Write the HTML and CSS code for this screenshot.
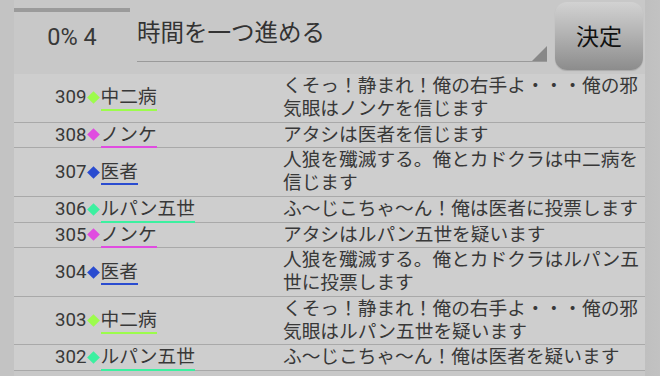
FILE: index.html
```html
<!DOCTYPE html>
<html lang="ja">
<head>
<meta charset="utf-8">
<link rel="stylesheet" href="styles.css">
</head>
<body>
<div class="app">
  <div class="header">
    <div class="progress">
      <div class="bar"></div>
      <div class="pct">0% 4</div>
    </div>
    <div class="select">
      <span class="select-text">時間を一つ進める</span>
      <span class="tri"></span>
    </div>
    <div class="btn">決定</div>
  </div>
  <div class="list">
    <div class="row">
      <div class="who"><span class="num">309</span><span class="dia c-green"></span><span class="name u-green">中二病</span></div>
      <div class="msg">くそっ！静まれ！俺の右手よ・・・俺の邪気眼はノンケを信じます</div>
    </div>
    <div class="row">
      <div class="who"><span class="num">308</span><span class="dia c-pink"></span><span class="name u-pink">ノンケ</span></div>
      <div class="msg">アタシは医者を信じます</div>
    </div>
    <div class="row">
      <div class="who"><span class="num">307</span><span class="dia c-blue"></span><span class="name u-blue">医者</span></div>
      <div class="msg">人狼を殲滅する。俺とカドクラは中二病を信じます</div>
    </div>
    <div class="row">
      <div class="who"><span class="num">306</span><span class="dia c-mint"></span><span class="name u-mint">ルパン五世</span></div>
      <div class="msg">ふ〜じこちゃ〜ん！俺は医者に投票します</div>
    </div>
    <div class="row">
      <div class="who"><span class="num">305</span><span class="dia c-pink"></span><span class="name u-pink">ノンケ</span></div>
      <div class="msg">アタシはルパン五世を疑います</div>
    </div>
    <div class="row">
      <div class="who"><span class="num">304</span><span class="dia c-blue"></span><span class="name u-blue">医者</span></div>
      <div class="msg">人狼を殲滅する。俺とカドクラはルパン五世に投票します</div>
    </div>
    <div class="row">
      <div class="who"><span class="num">303</span><span class="dia c-green"></span><span class="name u-green">中二病</span></div>
      <div class="msg">くそっ！静まれ！俺の右手よ・・・俺の邪気眼はルパン五世を疑います</div>
    </div>
    <div class="row">
      <div class="who"><span class="num">302</span><span class="dia c-mint"></span><span class="name u-mint">ルパン五世</span></div>
      <div class="msg">ふ〜じこちゃ〜ん！俺は医者を疑います</div>
    </div>
  </div>
</div>
</body>
</html>
```

FILE: styles.css
```css
html, body {
  margin: 0;
  padding: 0;
  background: #c7c7c7;
}
body {
  font-family: Roboto, "Noto Sans CJK JP", sans-serif;
  color: #3a3a3a;
  overflow: hidden;
}
.app {
  width: 660px;
  height: 376px;
  display: flex;
  flex-direction: column;
  background: linear-gradient(to right, #c3c3c3 0, #c3c3c3 14px, #c8c8c8 14px, #c8c8c8 645px, #bfbfbf 645px, #c2c2c2 660px);
}
.header {
  height: 74px;
  display: flex;
  padding-left: 14px;
  flex-shrink: 0;
}
.progress {
  width: 116px;
  padding-top: 8px;
}
.bar {
  height: 4px;
  background: #9b9b9b;
}
.pct {
  text-align: center;
  font-size: 23.5px;
  line-height: 28px;
  margin-top: 11px;
  color: #383838;
}
.select {
  margin-left: 7px;
  width: 410px;
  height: 61px;
  border-bottom: 1px solid #9a9a9a;
  position: relative;
}
.select-text {
  display: block;
  font-size: 23.5px;
  line-height: 30px;
  margin-top: 18px;
  color: #333;
}
.tri {
  position: absolute;
  right: 0;
  bottom: 0;
  width: 0;
  height: 0;
  border-left: 15px solid transparent;
  border-bottom: 15px solid #888;
}
.btn {
  margin-left: 8px;
  margin-top: 2px;
  width: 88px;
  height: 68px;
  border-radius: 12px;
  background: linear-gradient(to bottom, #d2d2d2 0%, #b4b4b4 45%, #8c8c8c 100%);
  box-shadow: 0 1px 1px rgba(0,0,0,0.15);
  display: flex;
  align-items: center;
  justify-content: center;
  font-size: 23px;
  color: #111;
  padding-bottom: 2px;
  box-sizing: border-box;
}
.list {
  margin-left: 14px;
  width: 631px;
  background: #cecece;
}
.row {
  display: flex;
  border-bottom: 1px solid #a9a9a9;
  padding: 1px 0;
}
.who {
  width: 269px;
  flex-shrink: 0;
  display: flex;
  align-items: center;
  padding-left: 41px;
  box-sizing: border-box;
  font-size: 18.7px;
  line-height: 22.75px;
}
.num {
  color: #383838;
}
.dia {
  width: 9px;
  height: 9px;
  transform: rotate(45deg);
  margin: 0 3px 0 2px;
}
.name {
  border-bottom: 2px solid;
  color: #383838;
  margin-bottom: -2px;
}
.msg {
  flex: 1;
  font-size: 18.7px;
  line-height: 22.75px;
  color: #383838;
}
.c-green { background: #9cfc4c; }
.c-pink { background: #e04ce0; }
.c-blue { background: #2a4cd0; }
.c-mint { background: #3cf0a0; }
.u-green { border-color: #9cfc4c; }
.u-pink { border-color: #e04ce0; }
.u-blue { border-color: #2a4cd0; }
.u-mint { border-color: #3cf0a0; }
```
